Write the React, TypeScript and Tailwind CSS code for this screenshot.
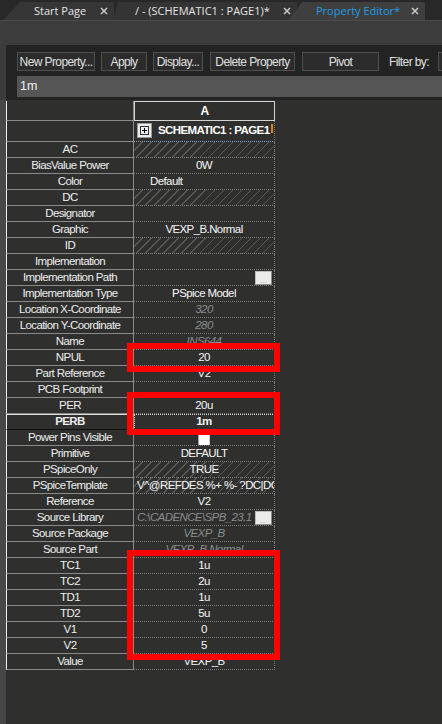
import React from "react";

type Row = {
  name: string;
  value?: string;
  align?: "center" | "left" | "indent";
  ro?: boolean;
  hatch?: boolean;
  btn?: boolean;
  check?: boolean;
  sel?: boolean;
};

const rows: Row[] = [
  { name: "AC", hatch: true },
  { name: "BiasValue Power", value: "0W" },
  { name: "Color", value: "Default", align: "indent" },
  { name: "DC", hatch: true },
  { name: "Designator" },
  { name: "Graphic", value: "VEXP_B.Normal" },
  { name: "ID", hatch: true },
  { name: "Implementation" },
  { name: "Implementation Path", btn: true },
  { name: "Implementation Type", value: "PSpice Model" },
  { name: "Location X-Coordinate", value: "320", ro: true },
  { name: "Location Y-Coordinate", value: "280", ro: true },
  { name: "Name", value: "INS644", ro: true },
  { name: "NPUL", value: "20" },
  { name: "Part Reference", value: "V2" },
  { name: "PCB Footprint" },
  { name: "PER", value: "20u" },
  { name: "PERB", value: "1m", sel: true },
  { name: "Power Pins Visible", check: true },
  { name: "Primitive", value: "DEFAULT" },
  { name: "PSpiceOnly", value: "TRUE", hatch: true },
  { name: "PSpiceTemplate", value: "V^@REFDES %+ %- ?DC|DC @DC| ?AC|AC @AC|", align: "left", hatch: true },
  { name: "Reference", value: "V2" },
  { name: "Source Library", value: "C:\\CADENCE\\SPB_23.1", ro: true, align: "left", btn: true },
  { name: "Source Package", value: "VEXP_B", ro: true },
  { name: "Source Part", value: "VEXP_B.Normal", ro: true },
  { name: "TC1", value: "1u" },
  { name: "TC2", value: "2u" },
  { name: "TD1", value: "1u" },
  { name: "TD2", value: "5u" },
  { name: "V1", value: "0" },
  { name: "V2", value: "5" },
  { name: "Value", value: "VEXP_B" },
];

const narrow = "font-['Liberation_Sans',Arial,sans-serif] tracking-[-0.6px]";

function Close() {
  return (
    <svg width="8" height="8" viewBox="0 0 8 8" className="shrink-0">
      <path d="M1 1L7 7M7 1L1 7" stroke="#c6c6c6" strokeWidth="1.6" />
    </svg>
  );
}

function DotButton() {
  return (
    <div className="absolute right-[2px] top-[1px] w-[17px] h-[14px] bg-[#ebecea] border border-[#bdbdbd] border-r-[#8a8a8a] border-b-[#8a8a8a] flex items-end justify-center text-[7px] leading-[7px] tracking-normal text-[#9a9a9a]">
      ...
    </div>
  );
}

function GridRow({ row }: { row: Row }) {
  const nameCls = row.sel
    ? "border-t border-t-[#dcdcdc] border-b-[#101010] font-bold"
    : "border-b-[#8a8a8a]";
  const align =
    row.align === "left"
      ? "justify-start pl-[3px]"
      : row.align === "indent"
        ? "justify-start pl-[16px]"
        : "justify-center";
  const hatch = row.hatch
    ? "bg-[repeating-linear-gradient(135deg,transparent_0_5.4px,#575857_5.4px_6.4px)]"
    : "";
  const sel = row.sel ? "outline outline-1 outline-dotted outline-[#d6d6d6] -outline-offset-1 font-bold" : "";
  return (
    <div className="flex h-[16px]">
      <div
        className={`w-[128px] shrink-0 border-l border-l-[#f2f2f2] border-r border-r-[#8a8a8a] border-b ${nameCls} flex items-center justify-center text-[#ededed] whitespace-nowrap`}
      >
        {row.name}
      </div>
      <div
        className={`relative w-[141px] shrink-0 overflow-hidden border-b border-r border-dotted border-[#7c7c7c] flex items-center ${align} ${hatch} ${sel} whitespace-nowrap ${row.ro ? "italic text-[#8c8c8c]" : "text-[#f6f6f6]"}`}
      >
        {row.value}
        {row.check ? (
          <div className="self-start mt-[4px] w-[12px] h-[12px] bg-white border border-[#a0a0a0] border-r-[#d0d0d0]" />
        ) : null}
        {row.btn ? <DotButton /> : null}
      </div>
    </div>
  );
}

export default function App() {
  return (
    <div className="w-[442px] h-[724px] overflow-hidden bg-[#272827] flex flex-col">
      {/* tab strip */}
      <div className="h-[20px] shrink-0 flex items-end pl-[3px] font-['Open_Sans','Noto_Sans',sans-serif] text-[11px]">
        <div className="h-[18px] w-[111px] shrink-0 bg-[#353635] [clip-path:polygon(17px_0,100%_0,100%_100%,0_100%)] rounded-tr-[2px] flex items-center pl-[31px] pr-[6px] text-[#e4e4e4]">
          <span>Start Page</span>
          <span className="ml-auto"><Close /></span>
        </div>
        <div className="h-[18px] w-[184px] shrink-0 -ml-[1px] bg-[#333433] [clip-path:polygon(5px_0,100%_0,100%_100%,0_100%)] rounded-tr-[2px] flex items-center pl-[22px] pr-[6px] text-[#e4e4e4]">
          <span>/ - (SCHEMATIC1 : PAGE1)*</span>
          <span className="ml-auto"><Close /></span>
        </div>
        <div className="h-[18px] w-[136px] shrink-0 -ml-[8px] bg-[#3e3f3e] [clip-path:polygon(13px_0,100%_0,100%_100%,0_100%)] rounded-tr-[2px] flex items-center pl-[27px] pr-[6px] text-[#1e9de6]">
          <span>Property Editor*</span>
          <span className="ml-auto"><Close /></span>
        </div>
      </div>

      {/* panel */}
      <div className="flex-1 flex flex-col min-h-0 border-t border-[#4a4b4a] bg-[#3b3c3b]">
        <div className="h-[24px] shrink-0" />
        <div className="flex-1 flex min-h-0">
          <div className="w-[6px] shrink-0 flex flex-col">
            <div className="h-[55px] bg-[#3b3c3b]" />
            <div className="flex-1 bg-[#464746]" />
          </div>
          <div className={`flex-1 min-w-0 flex flex-col ${narrow} text-[11.5px]`}>
            {/* toolbar */}
            <div className="h-[55px] shrink-0 bg-[#222322] pt-[7px] pl-[11px] flex flex-col">
              <div className="flex h-[19px] items-stretch text-[#e0e0e0] whitespace-nowrap text-[12px]">
                <div className="w-[78px] shrink-0 border border-[#4e4f4e] bg-[#2b2c2b] flex items-center justify-center">New Property...</div>
                <div className="w-[46px] shrink-0 ml-[6px] border border-[#4e4f4e] bg-[#2b2c2b] flex items-center justify-center">Apply</div>
                <div className="w-[50px] shrink-0 ml-[6px] border border-[#4e4f4e] bg-[#2b2c2b] flex items-center justify-center">Display...</div>
                <div className="w-[85px] shrink-0 ml-[7px] border border-[#4e4f4e] bg-[#2b2c2b] flex items-center justify-center">Delete Property</div>
                <div className="w-[77px] shrink-0 ml-[7px] border border-[#4e4f4e] bg-[#2b2c2b] flex items-center justify-center">Pivot</div>
                <div className="shrink-0 ml-[10px] flex items-center">Filter by:</div>
                <div className="w-[60px] shrink-0 ml-[9px] border border-[#4e4f4e] bg-[#2b2c2b]" />
              </div>
              <div className="mt-[5px] h-[21px] bg-[#545554] pl-[3px] flex items-center text-[12.5px] tracking-normal text-[#f0f0f0]">1m</div>
            </div>

            {/* grid */}
            <div className="flex-1 bg-[#2f302e] pt-[1px]">
              <div className="relative w-[269px]">
                <div className="flex h-[20px]">
                  <div className="w-[128px] shrink-0 border-l border-l-[#f2f2f2] border-r border-r-[#8a8a8a] border-b border-b-[#8a8a8a]" />
                  <div className="w-[141px] shrink-0 border border-[#d2d2d2] flex items-center justify-center font-bold text-[12px] text-white">A</div>
                </div>
                <div className="flex h-[21px]">
                  <div className="w-[128px] shrink-0 border-l border-l-[#f2f2f2] border-r border-r-[#8a8a8a] border-b border-b-[#8a8a8a]" />
                  <div className="relative w-[141px] shrink-0 border-b border-r border-dotted border-b-[#86a3cc] border-r-[#7c7c7c] flex items-start pl-[3px] pt-[2px] whitespace-nowrap overflow-hidden">
                    <div className="w-[15px] h-[15px] shrink-0 bg-[#ececec] border border-[#9a9a9a] flex items-center justify-center">
                      <svg width="9" height="9" viewBox="0 0 9 9">
                        <rect x="0.5" y="0.5" width="8" height="8" fill="none" stroke="#333" />
                        <path d="M2 4.5H7M4.5 2V7" stroke="#000" strokeWidth="1" />
                      </svg>
                    </div>
                    <span className="ml-[6px] -mt-[1px] font-bold text-white">SCHEMATIC1 : PAGE1</span>
                    <div className="absolute right-[1px] top-[3px] w-[2px] h-[9px] bg-[#d9861f]" />
                  </div>
                </div>
                {rows.map((r) => (
                  <GridRow key={r.name} row={r} />
                ))}

                {/* annotation boxes */}
                <div className="absolute left-[121px] top-[242px] w-[153px] h-[29px] border-[6px] border-[#ff0000]" />
                <div className="absolute left-[121px] top-[291px] w-[153px] h-[43px] border-[6px] border-[#ff0000]" />
                <div className="absolute left-[121px] top-[449px] w-[153px] h-[110px] border-[6px] border-[#ff0000]" />
              </div>
            </div>
          </div>
        </div>
      </div>
    </div>
  );
}
